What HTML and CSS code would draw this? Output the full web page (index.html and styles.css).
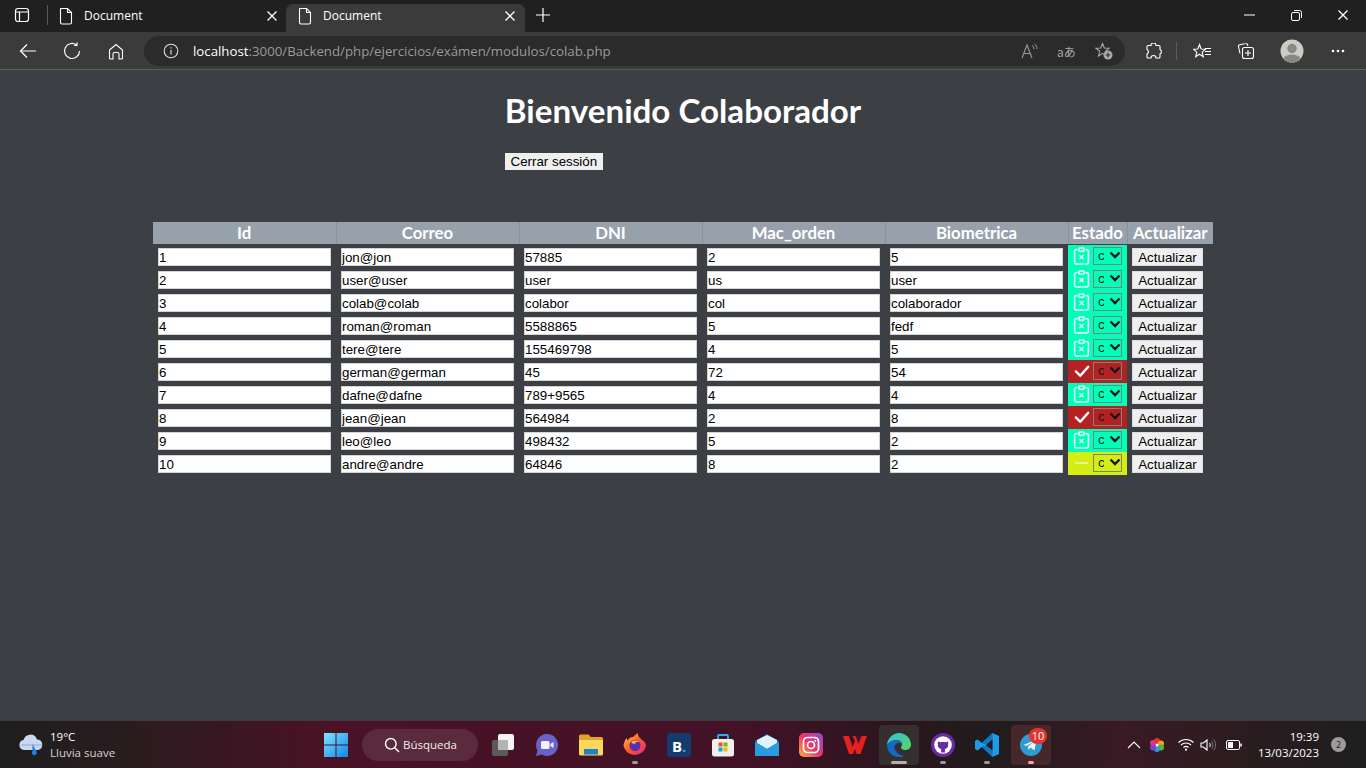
FILE: index.html
```html
<!DOCTYPE html>
<html lang="es">
<head>
<meta charset="utf-8">
<title>Document</title>
<link rel="stylesheet" href="styles.css">
</head>
<body>
<svg class="defs" width="0" height="0" aria-hidden="true">
  <symbol id="clip" viewBox="0 0 16 16"><path d="M6.146 7.146a.5.5 0 0 1 .708 0L8 8.293l1.146-1.147a.5.5 0 1 1 .708.708L8.707 9l1.147 1.146a.5.5 0 0 1-.708.708L8 9.707l-1.146 1.147a.5.5 0 0 1-.708-.708L7.293 9 6.146 7.854a.5.5 0 0 1 0-.708z"/><path d="M4 1.5H3a2 2 0 0 0-2 2V14a2 2 0 0 0 2 2h10a2 2 0 0 0 2-2V3.5a2 2 0 0 0-2-2h-1v1h1a1 1 0 0 1 1 1V14a1 1 0 0 1-1 1H3a1 1 0 0 1-1-1V3.5a1 1 0 0 1 1-1h1v-1z"/><path d="M9.5 1a.5.5 0 0 1 .5.5v1a.5.5 0 0 1-.5.5h-3a.5.5 0 0 1-.5-.5v-1a.5.5 0 0 1 .5-.5h3zm-3-1A1.5 1.5 0 0 0 5 1.5v1A1.5 1.5 0 0 0 6.5 4h3A1.5 1.5 0 0 0 11 2.5v-1A1.5 1.5 0 0 0 9.5 0h-3z"/></symbol>
  <symbol id="check" viewBox="0 0 16 16"><path d="M13.485 3.43a1 1 0 0 1 1.46 1.37l-7.4 8.3a1 1 0 0 1-1.44.03L2.05 9.08a1 1 0 0 1 1.41-1.42l3.3 3.3 6.7-7.5z"/></symbol>
  <symbol id="dash" viewBox="0 0 16 16"><path d="M2 8a1 1 0 0 1 1-1h10a1 1 0 1 1 0 2H3a1 1 0 0 1-1-1z"/></symbol>
  <symbol id="chev" viewBox="0 0 12 8"><path d="M1.5 1.5 6 6l4.5-4.5" fill="none" stroke="currentColor" stroke-width="2.4"/></symbol>
  <symbol id="doc" viewBox="0 0 16 18"><path d="M2.5 1.5h7l4 4v10a1.500 1.500 0 0 1-1.500 1.500H4A1.500 1.500 0 0 1 2.500 15.500zM9.500 1.500v4h4" fill="none" stroke="#fff" stroke-width="1.100"/></symbol>
  <symbol id="close" viewBox="0 0 12 12"><path d="M1.500 1.500l9 9M10.500 1.500l-9 9" fill="none" stroke="#fff" stroke-width="1.300"/></symbol>
</svg>

<div class="tabbar">
  <span class="tb-btn"><svg width="16" height="16" viewBox="0 0 16 16"><rect x="1.500" y="1.500" width="13" height="13" rx="2.500" fill="none" stroke="#fff" stroke-width="1.200"/><path d="M1.500 5h13M5.500 5v9.500" stroke="#fff" stroke-width="1.200"/></svg></span>
  <span class="tab-sep"></span>
  <div class="tab">
    <svg class="tab-doc" width="16" height="18"><use href="#doc"/></svg>
    <span class="tab-title">Document</span>
    <svg class="tab-x" width="12" height="12"><use href="#close"/></svg>
  </div>
  <div class="tab tab-active">
    <svg class="tab-doc" width="16" height="18"><use href="#doc"/></svg>
    <span class="tab-title">Document</span>
    <svg class="tab-x" width="12" height="12"><use href="#close"/></svg>
  </div>
  <span class="tab-plus"><svg width="16" height="16" viewBox="0 0 16 16"><path d="M8 1v14M1 8h14" stroke="#fff" stroke-width="1.200"/></svg></span>
  <span class="grow"></span>
  <span class="win-btn"><svg width="11" height="2" viewBox="0 0 11 2"><path d="M0 1h11" stroke="#fff"/></svg></span>
  <span class="win-btn"><svg width="11" height="11" viewBox="0 0 11 11"><rect x=".5" y="2.500" width="8" height="8" rx="1.500" fill="none" stroke="#fff"/><path d="M3 .5h5.500a2 2 0 0 1 2 2V8" fill="none" stroke="#fff"/></svg></span>
  <span class="win-btn"><svg width="12" height="12"><use href="#close"/></svg></span>
</div>

<div class="toolbar">
  <span class="nav-btn"><svg width="18" height="16" viewBox="0 0 18 16"><path d="M17 8H1.500M8 1.500 1.500 8 8 14.500" fill="none" stroke="#fff" stroke-width="1.200"/></svg></span>
  <span class="nav-btn"><svg width="18" height="18" viewBox="0 0 18 18"><path d="M13.500 3a7.500 7.500 0 1 0 3 6M14 .5V3.500H11" fill="none" stroke="#fff" stroke-width="1.200"/></svg></span>
  <span class="nav-btn"><svg width="16" height="17" viewBox="0 0 16 17"><path d="M1.500 7 8 1.500 14.500 7v8a1 1 0 0 1-1 1H11v-5a1.500 1.500 0 0 0-1.500-1.500h-3A1.500 1.500 0 0 0 5 11v5H2.500a1 1 0 0 1-1-1z" fill="none" stroke="#fff" stroke-width="1.100"/></svg></span>
  <div class="addr">
    <svg class="addr-info" width="16" height="16" viewBox="0 0 16 16"><circle cx="8" cy="8" r="6.800" fill="none" stroke="#ddd" stroke-width="1.100"/><path d="M8 7v4.500M8 4.300v1.200" stroke="#ddd" stroke-width="1.200"/></svg>
    <span class="url"><span class="url-host">localhost</span>:3000/Backend/php/ejercicios/exámen/modulos/colab.php</span>
    <span class="grow"></span>
    <span class="addr-icon"><svg width="17" height="16" viewBox="0 0 17 16"><path d="M1 15 6 2l5 13M2.800 10.500h6.400" fill="none" stroke="#9a9a9a" stroke-width="1.100"/><path d="M11 2.500c1.500.8 2 2 2 3.500M13.500 1c1.800 1.200 2.500 2.800 2.500 5" fill="none" stroke="#9a9a9a"/></svg></span>
    <span class="addr-icon addr-translate">aあ</span>
    <span class="addr-icon"><svg width="18" height="18" viewBox="0 0 18 18"><path d="M7.500 1.500 9.300 6l4.700.3-3.600 3 1.100 4.600-4-2.600-4 2.600 1.200-4.600-3.700-3L5.700 6z" fill="none" stroke="#a8a8a8" stroke-width="1.100"/><circle cx="13" cy="13" r="4.500" fill="#a8a8a8"/><path d="M13 10.800v4.400M10.800 13h4.400" stroke="#2b2b2b" stroke-width="1.100"/></svg></span>
  </div>
  <span class="nav-btn nav-ext"><svg width="17" height="17" viewBox="0 0 17 17"><path d="M6 2.500a2.500 2.500 0 0 1 5 0h3a1 1 0 0 1 1 1v3a2.500 2.500 0 0 1 0 4.500v3a1 1 0 0 1-1 1h-3a2.500 2.500 0 0 0-5 0H3a1 1 0 0 1-1-1v-3a2.500 2.500 0 0 0 0-4.500v-3a1 1 0 0 1 1-1z" fill="none" stroke="#fff" stroke-width="1.100"/></svg></span>
  <span class="tool-sep"></span>
  <span class="nav-btn nav-fav"><svg width="18" height="17" viewBox="0 0 18 17"><path d="M6.500 1.500 8.200 6l4.300.3-3.300 2.900 1.100 4.600-3.800-2.600-3.800 2.600 1.100-4.600L.5 6.300 4.800 6z" fill="none" stroke="#fff" stroke-width="1.100"/><path d="M12 5.500h6M12 8.500h6M12 11.500h6" stroke="#fff"/></svg></span>
  <span class="nav-btn"><svg width="18" height="18" viewBox="0 0 18 18"><path d="M3 11.500 1.500 4.500a1.500 1.500 0 0 1 1.200-1.800l6-1.200a1.500 1.500 0 0 1 1.800 1.100l.3 1.400" fill="none" stroke="#fff" stroke-width="1.100"/><rect x="5.500" y="5.500" width="11" height="11" rx="2" fill="#3b3b3b" stroke="#fff" stroke-width="1.100"/><path d="M11 8v6M8 11h6" stroke="#fff" stroke-width="1.100"/></svg></span>
  <span class="nav-btn nav-profile"><svg width="24" height="24" viewBox="0 0 24 24"><circle cx="12" cy="12" r="11.500" fill="#cdcbc6"/><circle cx="12" cy="9.500" r="4.700" fill="#8a8885"/><path d="M3.500 19.500C5 16.500 8 15.500 12 15.500s7 1 8.500 4A11.500 11.500 0 0 1 12 23.500a11.500 11.500 0 0 1-8.500-4z" fill="#8a8885"/></svg></span>
  <span class="nav-btn"><svg width="14" height="4" viewBox="0 0 14 4"><circle cx="2" cy="2" r="1.300" fill="#fff"/><circle cx="7" cy="2" r="1.300" fill="#fff"/><circle cx="12" cy="2" r="1.300" fill="#fff"/></svg></span>
</div>

<main class="page">
  <header class="welcome">
    <h1 class="welcome-title">Bienvenido Colaborador</h1>
    <button class="logout" type="button">Cerrar sessión</button>
  </header>

  <table class="grid">
    <colgroup>
      <col class="col-data"><col class="col-data"><col class="col-data"><col class="col-data"><col class="col-data"><col class="col-state"><col class="col-act">
    </colgroup>
    <thead>
      <tr><th>Id</th><th>Correo</th><th>DNI</th><th>Mac_orden</th><th>Biometrica</th><th>Estado</th><th>Actualizar</th></tr>
    </thead>
    <tbody>
      <tr>
        <td><input class="field" value="1"></td><td><input class="field" value="jon@jon"></td><td><input class="field" value="57885"></td><td><input class="field" value="2"></td><td><input class="field" value="5"></td>
        <td class="state pending"><div class="state-in"><svg class="st-icon"><use href="#clip"/></svg><span class="pick"><select class="st-sel"><option>completado</option></select><svg class="pick-chev"><use href="#chev"/></svg></span></div></td>
        <td class="act"><button class="update" type="button">Actualizar</button></td>
      </tr>
      <tr>
        <td><input class="field" value="2"></td><td><input class="field" value="user@user"></td><td><input class="field" value="user"></td><td><input class="field" value="us"></td><td><input class="field" value="user"></td>
        <td class="state pending"><div class="state-in"><svg class="st-icon"><use href="#clip"/></svg><span class="pick"><select class="st-sel"><option>completado</option></select><svg class="pick-chev"><use href="#chev"/></svg></span></div></td>
        <td class="act"><button class="update" type="button">Actualizar</button></td>
      </tr>
      <tr>
        <td><input class="field" value="3"></td><td><input class="field" value="colab@colab"></td><td><input class="field" value="colabor"></td><td><input class="field" value="col"></td><td><input class="field" value="colaborador"></td>
        <td class="state pending"><div class="state-in"><svg class="st-icon"><use href="#clip"/></svg><span class="pick"><select class="st-sel"><option>completado</option></select><svg class="pick-chev"><use href="#chev"/></svg></span></div></td>
        <td class="act"><button class="update" type="button">Actualizar</button></td>
      </tr>
      <tr>
        <td><input class="field" value="4"></td><td><input class="field" value="roman@roman"></td><td><input class="field" value="5588865"></td><td><input class="field" value="5"></td><td><input class="field" value="fedf"></td>
        <td class="state pending"><div class="state-in"><svg class="st-icon"><use href="#clip"/></svg><span class="pick"><select class="st-sel"><option>completado</option></select><svg class="pick-chev"><use href="#chev"/></svg></span></div></td>
        <td class="act"><button class="update" type="button">Actualizar</button></td>
      </tr>
      <tr>
        <td><input class="field" value="5"></td><td><input class="field" value="tere@tere"></td><td><input class="field" value="155469798"></td><td><input class="field" value="4"></td><td><input class="field" value="5"></td>
        <td class="state pending"><div class="state-in"><svg class="st-icon"><use href="#clip"/></svg><span class="pick"><select class="st-sel"><option>completado</option></select><svg class="pick-chev"><use href="#chev"/></svg></span></div></td>
        <td class="act"><button class="update" type="button">Actualizar</button></td>
      </tr>
      <tr>
        <td><input class="field" value="6"></td><td><input class="field" value="german@german"></td><td><input class="field" value="45"></td><td><input class="field" value="72"></td><td><input class="field" value="54"></td>
        <td class="state done"><div class="state-in"><svg class="st-icon"><use href="#check"/></svg><span class="pick"><select class="st-sel"><option>completado</option></select><svg class="pick-chev"><use href="#chev"/></svg></span></div></td>
        <td class="act"><button class="update" type="button">Actualizar</button></td>
      </tr>
      <tr>
        <td><input class="field" value="7"></td><td><input class="field" value="dafne@dafne"></td><td><input class="field" value="789+9565"></td><td><input class="field" value="4"></td><td><input class="field" value="4"></td>
        <td class="state pending"><div class="state-in"><svg class="st-icon"><use href="#clip"/></svg><span class="pick"><select class="st-sel"><option>completado</option></select><svg class="pick-chev"><use href="#chev"/></svg></span></div></td>
        <td class="act"><button class="update" type="button">Actualizar</button></td>
      </tr>
      <tr>
        <td><input class="field" value="8"></td><td><input class="field" value="jean@jean"></td><td><input class="field" value="564984"></td><td><input class="field" value="2"></td><td><input class="field" value="8"></td>
        <td class="state done"><div class="state-in"><svg class="st-icon"><use href="#check"/></svg><span class="pick"><select class="st-sel"><option>completado</option></select><svg class="pick-chev"><use href="#chev"/></svg></span></div></td>
        <td class="act"><button class="update" type="button">Actualizar</button></td>
      </tr>
      <tr>
        <td><input class="field" value="9"></td><td><input class="field" value="leo@leo"></td><td><input class="field" value="498432"></td><td><input class="field" value="5"></td><td><input class="field" value="2"></td>
        <td class="state pending"><div class="state-in"><svg class="st-icon"><use href="#clip"/></svg><span class="pick"><select class="st-sel"><option>completado</option></select><svg class="pick-chev"><use href="#chev"/></svg></span></div></td>
        <td class="act"><button class="update" type="button">Actualizar</button></td>
      </tr>
      <tr>
        <td><input class="field" value="10"></td><td><input class="field" value="andre@andre"></td><td><input class="field" value="64846"></td><td><input class="field" value="8"></td><td><input class="field" value="2"></td>
        <td class="state waiting"><div class="state-in"><svg class="st-icon"><use href="#dash"/></svg><span class="pick"><select class="st-sel"><option>completado</option></select><svg class="pick-chev"><use href="#chev"/></svg></span></div></td>
        <td class="act"><button class="update" type="button">Actualizar</button></td>
      </tr>
    </tbody>
  </table>
</main>

<footer class="taskbar">
  <div class="tb-left">
    <svg width="26" height="24" viewBox="0 0 26 24"><path d="M6 17a5 5 0 0 1-.5-9.900A7 7 0 0 1 19 6.500 5.300 5.300 0 0 1 20 17z" fill="#c9d9f2"/><path d="M3 12h21" stroke="#9fb9e6" stroke-width="1.500"/><path d="M15.500 10v7a2.500 2.500 0 1 0 4 .5z" fill="#1f7fe8" transform="translate(-1 1)"/></svg>
    <div class="weather"><span class="weather-t">19°C</span><span class="weather-d">Lluvia suave</span></div>
  </div>
  <div class="tb-center">
    <span class="slot"><svg width="24" height="24" viewBox="0 0 24 24"><defs><linearGradient id="winG" x1="0" y1="0" x2="1" y2="1"><stop offset="0" stop-color="#7fe6ff"/><stop offset="1" stop-color="#0f86e8"/></linearGradient></defs><path d="M0 0h11.500v11.500H0zM12.500 0H24v11.500H12.500zM0 12.500h11.500V24H0zM12.500 12.500H24V24H12.500z" fill="url(#winG)"/></svg></span>
    <div class="search">
      <svg width="16" height="16" viewBox="0 0 16 16"><circle cx="6.800" cy="6.800" r="5.300" fill="none" stroke="#fff" stroke-width="1.400"/><path d="m10.800 10.800 4.200 4.200" stroke="#fff" stroke-width="1.500"/></svg>
      <span>Búsqueda</span>
    </div>
    <span class="slot"><svg width="24" height="24" viewBox="0 0 24 24"><rect x="1" y="7" width="16" height="16" rx="2" fill="#5a5a5a"/><rect x="7" y="1" width="16" height="16" rx="2" fill="#f4f4f4"/><rect x="7" y="7" width="10" height="10" fill="#b4b4b4"/></svg></span>
    <span class="slot"><svg width="24" height="24" viewBox="0 0 24 24"><path d="M12 1a11 11 0 1 1-5.500 20.500L1 23l1.500-5.500A11 11 0 0 1 12 1z" fill="#6b62c9"/><rect x="6" y="8" width="8.500" height="8" rx="1.500" fill="#f4f1ff"/><path d="m15.500 11 3-2v6l-3-2z" fill="#f4f1ff"/></svg></span>
    <span class="slot"><svg width="24" height="22" viewBox="0 0 24 22"><path d="M0 2a1.500 1.500 0 0 1 1.500-1.500h8L12 3h10.500A1.500 1.500 0 0 1 24 4.500V8H0z" fill="#e0a526"/><path d="M0 6h24v14a1.500 1.500 0 0 1-1.500 1.500h-21A1.500 1.500 0 0 1 0 20z" fill="#fbd75b"/><path d="M5 15h14v5.500H5z" fill="#1c82c8"/></svg></span>
    <span class="slot slot-run"><svg width="24" height="24" viewBox="0 0 24 24"><defs><linearGradient id="fxG" x1="0" y1="0" x2="1" y2="1"><stop offset="0" stop-color="#ffd23a"/><stop offset=".5" stop-color="#ff5a2b"/><stop offset="1" stop-color="#e0268a"/></linearGradient></defs><path d="M1.500 9C2 7 3 5.500 4 5c-.2 1 0 2 .5 2.500C6 5 8 4 10 4c1.500-1 3-3 5-4-.5 2 .5 3.500 2.500 5.500 3 2.500 5.500 4 5.500 7.500A11.500 11.500 0 0 1 .5 12.500C.5 11 1 10 1.500 9z" fill="url(#fxG)"/><circle cx="12" cy="12.500" r="5.500" fill="#5b2fb0"/><path d="M8 9c2-2 6-2 8 0-2 0-4 0-4 2-2 0-3-1-4-2z" fill="#ffb13b"/></svg></span>
    <span class="slot"><svg width="24" height="24" viewBox="0 0 24 24"><rect width="24" height="24" rx="3" fill="#143a6e"/><text x="5" y="18.500" class="bk-text">B<tspan class="bk-dot">.</tspan></text></svg></span>
    <span class="slot"><svg width="24" height="24" viewBox="0 0 24 24"><path d="M7 7V3a1 1 0 0 1 1-1h8a1 1 0 0 1 1 1v4" fill="none" stroke="#2ab3ea" stroke-width="1.800"/><rect x="1" y="6" width="22" height="17.500" rx="2.500" fill="#f1efee"/><path d="M7.500 9.500h4v4h-4z" fill="#f25022"/><path d="M12.500 9.500h4v4h-4z" fill="#7fba00"/><path d="M7.500 14.500h4v4h-4z" fill="#00a4ef"/><path d="M12.500 14.500h4v4h-4z" fill="#ffb900"/></svg></span>
    <span class="slot"><svg width="24" height="22" viewBox="0 0 24 22"><path d="M12 0 24 7v15H0V7z" fill="#1270c4"/><path d="M2 6 12 1l10 5v3l-10 6L2 9z" fill="#dff3fc"/><path d="M0 8l12 7 12-7v14H0z" fill="#2b9be0"/></svg></span>
    <span class="slot"><svg width="24" height="24" viewBox="0 0 24 24"><defs><linearGradient id="igG" x1="0" y1="1" x2="1" y2="0"><stop offset="0" stop-color="#fdb43c"/><stop offset=".5" stop-color="#e8336e"/><stop offset="1" stop-color="#8f4fd0"/></linearGradient></defs><rect width="24" height="24" rx="5" fill="url(#igG)"/><rect x="4.500" y="4.500" width="15" height="15" rx="4" fill="none" stroke="#fff" stroke-width="1.700"/><circle cx="12" cy="12" r="3.500" fill="none" stroke="#fff" stroke-width="1.700"/><circle cx="16.300" cy="7.700" r="1" fill="#fff"/></svg></span>
    <span class="slot"><svg width="24" height="20" viewBox="0 0 24 20"><path d="M0 1h6l3.500 11L12 6 9.500 1h14.500L17.500 19h-4L12 14l-2 5H6z" fill="#e8211e"/><path d="M12.500 1h6l-3 8z" fill="#4a1226"/></svg></span>
    <span class="slot slot-active"><svg width="24" height="24" viewBox="0 0 24 24"><defs><linearGradient id="edG" x1="0" y1="0" x2="1" y2="1"><stop offset="0" stop-color="#36c1d9"/><stop offset="1" stop-color="#54d85c"/></linearGradient></defs><path d="M12 0a12 12 0 0 1 12 12c0 3-3 5-6 5-2 0-4-1-4-2.500 0-.8 1-1.200 1-3C15 9 12.500 7 10 7 6 7 2 9.500 0 12 .5 5 6 0 12 0z" fill="url(#edG)"/><path d="M0 12c2-3.500 5.500-5 9-5 3 0 5 2 5 3.500-1.500-1-6-1-6.500 3-.4 4 3.500 8.500 9.500 9.500A12 12 0 0 1 0 12z" fill="#1668c8"/></svg></span>
    <span class="slot slot-run"><svg width="24" height="24" viewBox="0 0 24 24"><circle cx="12" cy="12" r="12" fill="#6a2aa0"/><circle cx="12" cy="12" r="8.800" fill="#fff"/><path d="M7 8.500l2.200.8c1.800-.5 3.800-.5 5.600 0L17 8.500c.4 1.300.4 2.300.1 3.100.5 2.800-1 4-3.200 4.400v3.500h-3.800V16c-2.200-.4-3.700-1.600-3.200-4.400-.3-.8-.3-1.800.1-3.100z" fill="#6a2aa0"/></svg></span>
    <span class="slot slot-run"><svg width="24" height="24" viewBox="0 0 24 24"><path d="M17.500 0 24 3v18l-6.500 3L7 14l-4.500 3.500L0 16V8l2.500-1.500L7 10z" fill="#1f9be6"/><path d="M17.500 0v24L7 14l5-2-5-2z" fill="#0f76c4"/><path d="M17.500 6.500 11 12l6.500 5.500z" fill="#2a1a1f"/></svg></span>
    <span class="slot slot-tele slot-run">
      <svg width="24" height="24" viewBox="0 0 24 24"><circle cx="12" cy="12" r="11" fill="#2f9ad6"/><path d="m4.500 12 13-5.500-2 11-4-3-2 2.500-.5-3.500 6-5-7.500 4.500z" fill="#eef7fc"/></svg>
      <span class="badge">10</span>
    </span>
  </div>
  <div class="tb-right">
    <svg class="tray tray-chev" width="14" height="8" viewBox="0 0 14 8"><path d="M1 7l6-6 6 6" fill="none" stroke="#fff" stroke-width="1.100"/></svg>
    <svg class="tray tray-color" width="14" height="14" viewBox="0 0 14 14"><circle cx="7" cy="3" r="3" fill="#e8332b"/><circle cx="11" cy="5.500" r="3" fill="#f0a020"/><circle cx="11" cy="9.500" r="3" fill="#5bb531"/><circle cx="7" cy="11" r="3" fill="#2f9ad6"/><circle cx="3" cy="9.500" r="3" fill="#6a4ac0"/><circle cx="3" cy="5" r="3" fill="#e0308a"/><circle cx="7" cy="7" r="1.500" fill="#fff"/></svg>
    <svg class="tray tray-wifi" width="16" height="13" viewBox="0 0 16 13"><path d="M.5 4.500c4.200-4 10.800-4 15 0M3 7c2.800-2.700 7.200-2.700 10 0M5.500 9.500c1.400-1.300 3.600-1.300 5 0" fill="none" stroke="#fff" stroke-width="1.100"/><circle cx="8" cy="11.700" r="1.100" fill="#fff"/></svg>
    <svg class="tray tray-vol" width="16" height="14" viewBox="0 0 16 14"><path d="M1 5h2.500L7 2v10L3.500 9H1z" fill="none" stroke="#fff" stroke-width="1.100"/><path d="M9.500 5c1 1.200 1 2.800 0 4" fill="none" stroke="#fff"/><path d="M11.500 3.200c1.900 2.200 1.900 5.400 0 7.600M13.500 1.500c2.800 3.300 2.800 7.700 0 11" fill="none" stroke="#777"/></svg>
    <svg class="tray tray-bat" width="16" height="10" viewBox="0 0 16 10"><rect x=".5" y=".5" width="13" height="9" rx="1.500" fill="none" stroke="#fff"/><rect x="2" y="2" width="5" height="6" fill="#fff"/><path d="M15 3.500v3" stroke="#fff" stroke-width="1.500"/></svg>
    <div class="clock"><span>19:39</span><span>13/03/2023</span></div>
    <span class="notif">2</span>
  </div>
</footer>
</body>
</html>
```
FILE: styles.css
```css
* { box-sizing: border-box; }
html, body { margin: 0; padding: 0; height: 100%; }
body {
  width: 1366px;
  height: 768px;
  overflow: hidden;
  display: flex;
  flex-direction: column;
  background: #3c4044;
  font-family: "Open Sans", "Noto Sans", sans-serif;
  color: #fff;
}
svg { display: block; flex: none; }
.defs { position: absolute; }
.grow { flex: 1; }

/* Title bar with tabs */
.tabbar {
  height: 32px;
  flex: none;
  display: flex;
  align-items: flex-end;
  background: #202020;
}
.tb-btn { width: 44px; height: 30px; margin-bottom: 2px; margin-left: 4px; margin-right: -8px; display: flex; align-items: center; justify-content: center; padding-right: 8px; }
.tab-sep { width: 1px; height: 20px; background: #5a5a5a; margin: 0 0 7px 7px; }
.tab {
  width: 238px;
  height: 28px;
  display: flex;
  align-items: center;
  padding: 0 8px 5px 10px;
  font-size: 12px;
  color: #fff;
}
.tab-doc { margin-right: 10px; }
.tab-title { flex: 1; }
.tab-active { width: 239px; background: #3b3b3b; border-radius: 7px 7px 0 0; padding: 0 9px 5px 11px; }
.tab-plus { width: 36px; height: 30px; margin-bottom: 2px; display: flex; align-items: center; justify-content: center; }
.win-btn { width: 46.5px; height: 30px; margin-bottom: 2px; display: flex; align-items: center; justify-content: center; }

/* Toolbar */
.toolbar {
  height: 38px;
  flex: none;
  display: flex;
  align-items: flex-start;
  padding: 4px 0 0 6px;
  background: #3b3b3b;
  border-bottom: 1px solid #5c5c5c;
}
.nav-btn { width: 44px; height: 30px; display: flex; align-items: center; justify-content: center; }
.nav-ext { margin-left: 6px; }
.tool-sep { width: 1px; height: 18px; background: #5c5c5c; margin: 6px 3px 0 1px; }
.nav-profile { margin: 0 2px; }
.addr {
  width: 981px;
  height: 30px;
  margin-left: 6px;
  display: flex;
  align-items: center;
  padding: 0 3px 0 19px;
  background: #2b2b2b;
  border-radius: 15px;
  color: #9a9a9a;
  font-size: 13.25px;
}
.addr-info { margin-right: 14px; }
.url { white-space: nowrap; }
.url-host { color: #fff; }
.addr-icon { width: 37px; display: flex; justify-content: center; }
.addr-translate { font-family: "Noto Sans CJK JP", "Noto Sans", sans-serif; font-size: 12px; color: #a8a8a8; }

/* Page */
.page {
  flex: 1;
  min-height: 0;
  display: flex;
  flex-direction: column;
  align-items: center;
}
.welcome { margin-top: 20px; }
.welcome-title {
  margin: 0 0 23px;
  font-family: Lato, "Open Sans", sans-serif;
  font-size: 33.15px;
  line-height: 40px;
  font-weight: 700;
  color: #fff;
}
.logout {
  display: block;
  width: 98px;
  height: 17px;
  padding: 0;
  border: 0;
  background: #efefef;
  color: #000;
  font: 13.33px/17px "Liberation Sans", Arial, sans-serif;
}
.grid {
  margin-top: 52px;
  width: 1060px;
  table-layout: fixed;
  border-collapse: collapse;
}
.col-data { width: 183px; }
.col-state { width: 59px; }
.col-act { width: 86px; }
.grid th {
  height: 22px;
  padding: 0;
  background: #96a1ac;
  border-right: 1px solid #87929d;
  border-bottom: 1px solid #3c4044;
  font-family: Lato, "Open Sans", sans-serif;
  font-size: 16.8px;
  line-height: 21px;
  font-weight: 700;
  color: #fff;
}
.grid th:last-child { border-right: 0; }
.grid td { height: 23px; padding: 3px 5px 2px; vertical-align: top; }
.field {
  display: block;
  width: 173px;
  height: 18px;
  padding: 1px 0 0;
  border: 1px solid #d4d4d4;
  border-radius: 0;
  outline: 0;
  background: #fff;
  color: #000;
  font: 13.33px "Liberation Sans", Arial, sans-serif;
}
.grid td.state { padding: 2px 5px 0; }
.state-in { display: flex; align-items: flex-start; gap: 3px; }
.st-icon { width: 17px; height: 18px; fill: #fff; stroke: #fff; stroke-width: .35; }
.pending { background: #00ffb9; }
.done { background: #b22222; }
.waiting { background: #d4ed13; }
.waiting .st-icon { fill: #e9f58a; stroke: none; }
.pick { position: relative; display: block; width: 29px; height: 18px; }
.st-sel {
  appearance: none;
  display: block;
  width: 29px;
  height: 18px;
  padding: 0 17px 0 4px;
  border: 1px solid #80807c;
  border-radius: 0;
  outline: 0;
  background: transparent;
  color: #1a1a1a;
  font: 13.33px "Liberation Sans", Arial, sans-serif;
}
.pick-chev { position: absolute; right: 1px; top: 4px; width: 12px; height: 8px; color: #141414; pointer-events: none; }
.grid td.act { padding: 3px 0 2px 5px; }
.update {
  display: block;
  width: 71px;
  height: 18px;
  padding: 1px 0 0;
  border: 1px solid #dcdcdc;
  border-radius: 0;
  background: #efefef;
  color: #000;
  font: 13.33px/16px "Liberation Sans", Arial, sans-serif;
}

/* Taskbar */
.taskbar {
  height: 48px;
  flex: none;
  display: grid;
  grid-template-columns: 316px auto 1fr;
  align-items: center;
  background: linear-gradient(90deg, #1e1e1e 0, #2a1c1f 10%, #4a1226 24%, #421226 55%, #2a161e 66%, #201c1d 72%, #3a1a24 82%, #2c1c20 90%, #1e1e1e 100%);
  border-top: 1px solid #43383c;
}
.tb-left { display: flex; align-items: center; gap: 6px; padding-left: 18px; }
.weather { display: flex; flex-direction: column; font-size: 11.5px; line-height: 16px; }
.weather-d { color: #d8d2d4; }
.tb-center { display: flex; align-items: center; gap: 4px; }
.slot { position: relative; width: 40px; height: 40px; display: flex; align-items: center; justify-content: center; border-radius: 4px; }
.slot-run::after { content: ""; position: absolute; left: 17px; bottom: 1px; width: 6px; height: 3px; border-radius: 2px; background: #9a9a9a; }
.slot-active { background: #35302f; }
.slot-active::after { content: ""; position: absolute; left: 12px; bottom: 1px; width: 16px; height: 3px; border-radius: 2px; background: #b0b0b0; }
.slot-tele { background: #46282b; }
.slot-tele::after { background: #ff9fb0; }
.search {
  width: 116px;
  height: 32px;
  margin: 0 1px 0 2px;
  display: flex;
  align-items: center;
  gap: 3px;
  padding-left: 22px;
  border-radius: 16px;
  background: #5a2b3c;
  font-size: 11.5px;
  color: #f2eef0;
}
.bk-text { font: 700 15px "Open Sans", sans-serif; fill: #fff; }
.bk-dot { fill: #2aa6f0; }
.badge {
  position: absolute;
  top: 3px;
  right: 4px;
  width: 18px;
  height: 16px;
  border-radius: 8px;
  background: #e3342f;
  font-size: 11px;
  line-height: 16px;
  text-align: center;
  color: #fff;
}
.tb-right { display: flex; align-items: center; padding-left: 76px; }
.tray-chev { margin-right: 9px; }
.tray-color { margin-right: 14px; }
.tray-wifi { margin-right: 6px; }
.tray-vol { margin-right: 10px; }
.clock { width: 77px; margin-right: 12px; display: flex; flex-direction: column; align-items: flex-end; font-size: 11.5px; line-height: 16px; }
.notif { width: 15px; height: 15px; border-radius: 50%; background: #9c9a9a; color: #1e1e1e; font-size: 9px; line-height: 15px; text-align: center; }
```
